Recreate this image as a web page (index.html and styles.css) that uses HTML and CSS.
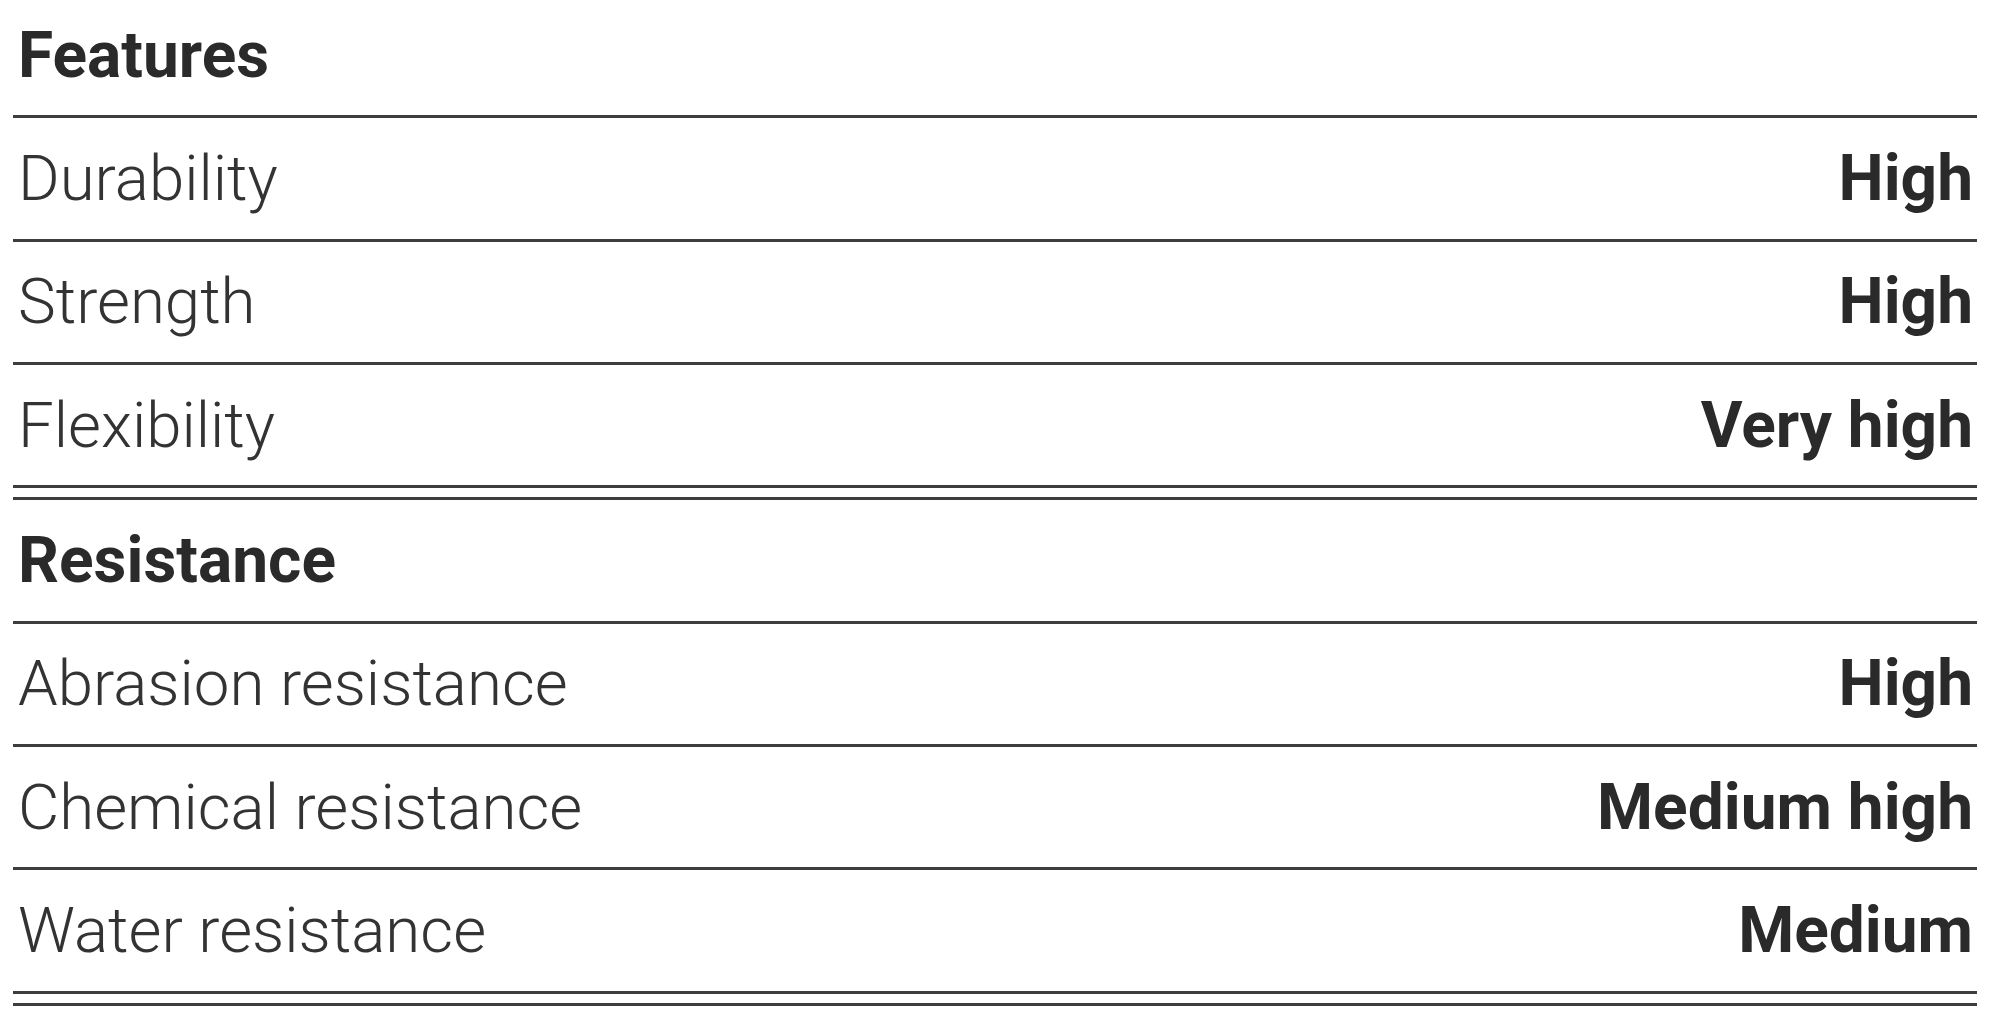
FILE: index.html
```html
<!DOCTYPE html>
<html lang="en">
<head>
<meta charset="utf-8">
<title>Specifications</title>
<link rel="stylesheet" href="styles.css">
</head>
<body>
<div class="specs">
  <section class="group">
    <div class="row head"><span class="label">Features</span></div>
    <div class="row"><span class="label">Durability</span><span class="value">High</span></div>
    <div class="row"><span class="label">Strength</span><span class="value">High</span></div>
    <div class="row"><span class="label">Flexibility</span><span class="value">Very high</span></div>
  </section>
  <section class="group">
    <div class="row head"><span class="label">Resistance</span></div>
    <div class="row"><span class="label">Abrasion resistance</span><span class="value">High</span></div>
    <div class="row"><span class="label">Chemical resistance</span><span class="value">Medium high</span></div>
    <div class="row"><span class="label">Water resistance</span><span class="value">Medium</span></div>
  </section>
</div>
</body>
</html>
```
FILE: styles.css
```css
html, body {
  margin: 0;
  padding: 0;
  background: #ffffff;
}

body {
  font-family: Roboto, "Liberation Sans", sans-serif;
  color: #2c2c2c;
  overflow: hidden;
}

.specs {
  width: 1964px;
  margin: -5px 0 0 13px;
}

.group {
  border-bottom: 3px solid #3d3d3d;
  padding-bottom: 9px;
}

.row {
  display: flex;
  justify-content: space-between;
  align-items: center;
  height: 120.33px;
  padding: 0 4px 0 5px;
  border-bottom: 3px solid #3d3d3d;
  font-size: 64px;
}

.label {
  font-size: 63.6px;
  font-weight: 300;
  color: #333333;
}

.value {
  font-weight: 700;
  color: #2a2a2a;
}

.head .label {
  font-size: 64px;
  font-weight: 700;
  color: #2a2a2a;
}
```
